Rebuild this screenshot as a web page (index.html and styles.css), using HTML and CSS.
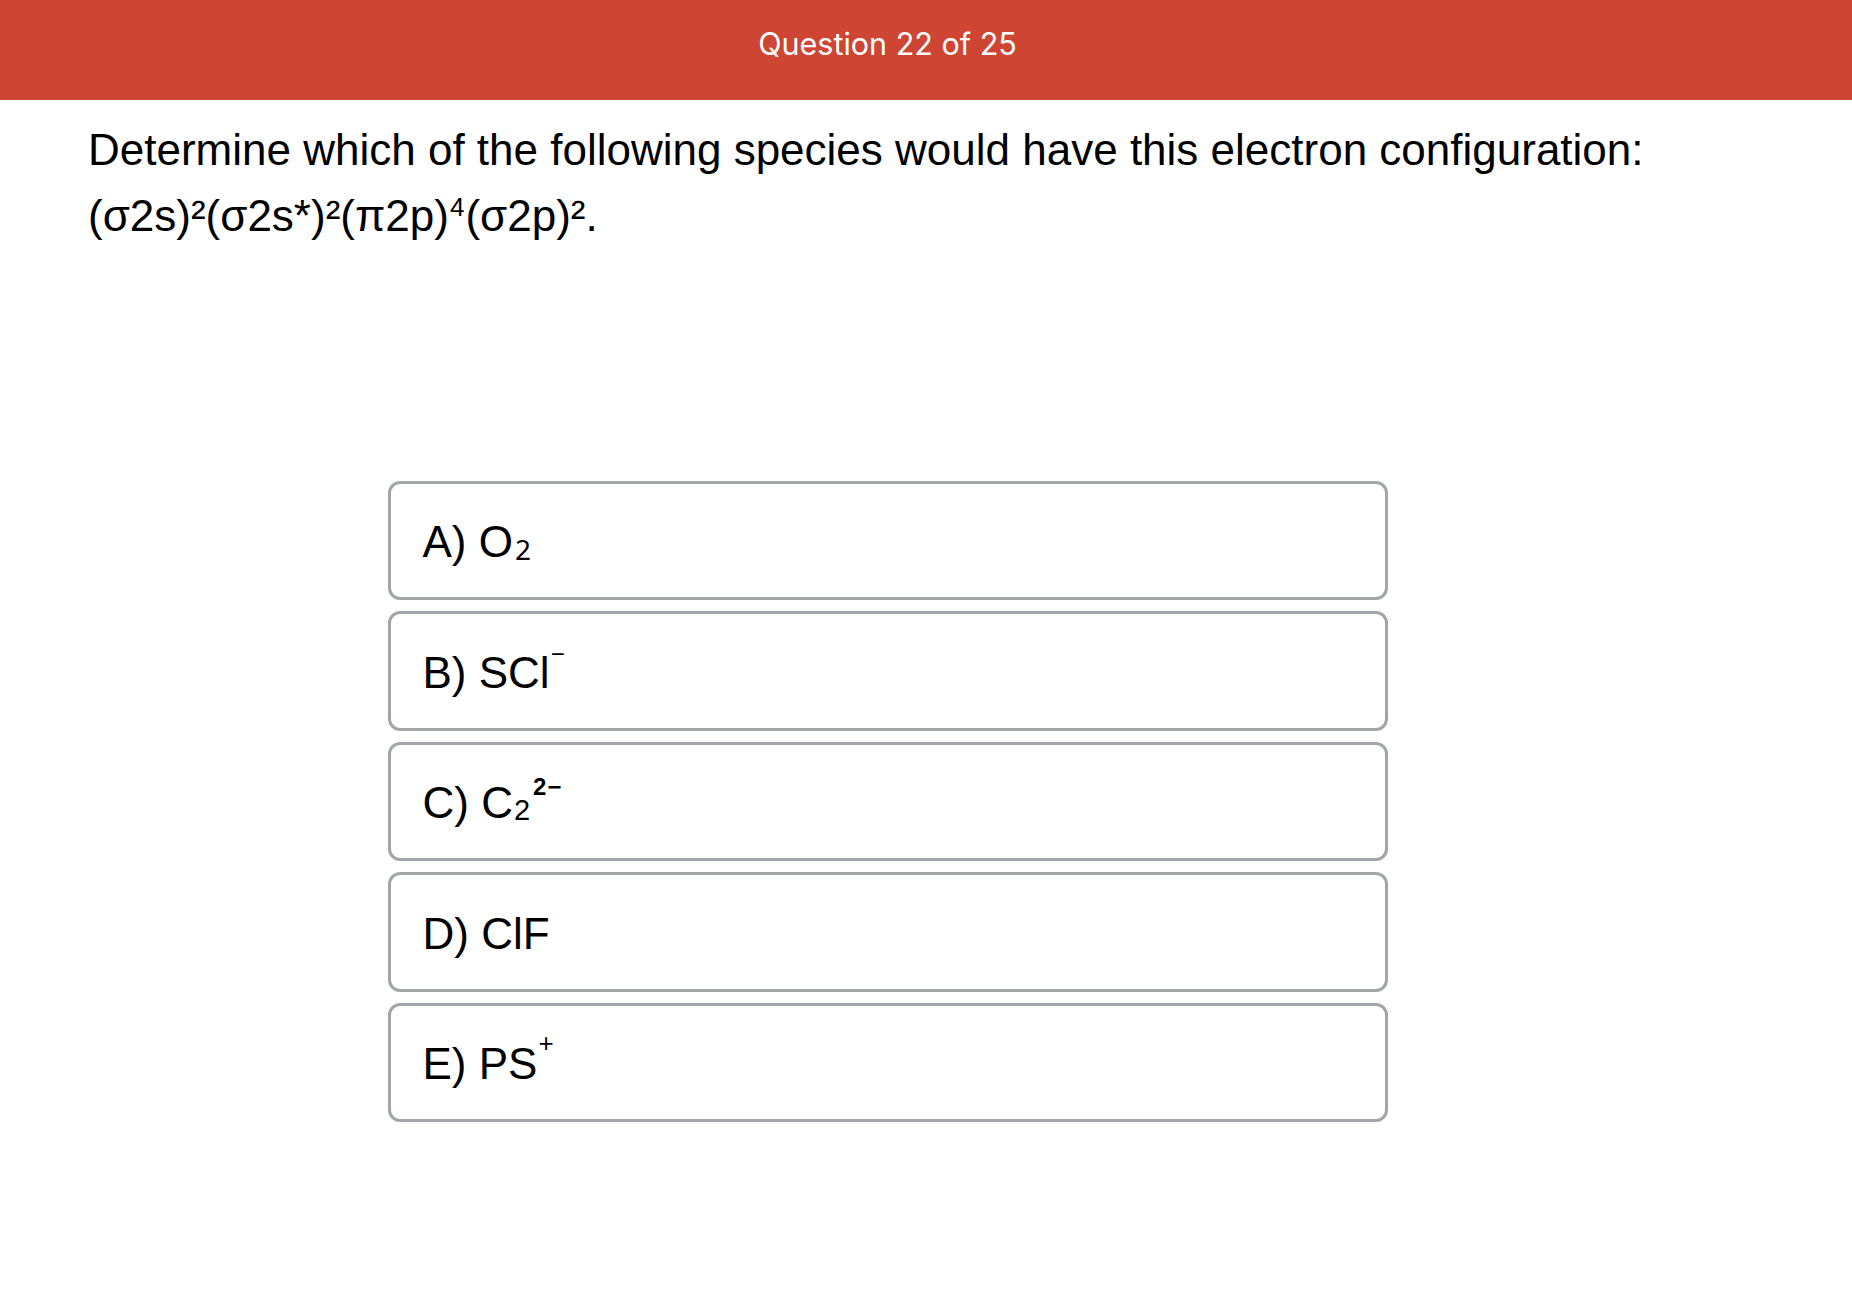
FILE: index.html
```html
<!DOCTYPE html>
<html lang="en">
<head>
<meta charset="utf-8">
<title>Question 22 of 25</title>
<link rel="stylesheet" href="styles.css">
</head>
<body>
<header class="topbar">
  <div class="topbar-inner">
    <span class="topbar-title">Question 22 of 25</span>
  </div>
</header>
<main class="page">
  <p class="question">Determine which of the following species would have this electron configuration:<br>(σ2s)²(σ2s*)²(π2p)<span class="q-sup">4</span>(σ2p)².</p>
  <div class="options">
    <div class="option">A) O<span class="noto-sub">2</span></div>
    <div class="option">B) SCl<span class="charge-minus">−</span></div>
    <div class="option">C) C<span class="index">2</span><span class="charge-bold">2−</span></div>
    <div class="option">D) ClF</div>
    <div class="option">E) PS<span class="charge-plus">+</span></div>
  </div>
</main>
</body>
</html>
```

FILE: styles.css
```css
html, body {
  margin: 0;
  padding: 0;
  background: #ffffff;
}

body {
  font-family: "Liberation Sans", Arial, Helvetica, sans-serif;
  color: #000000;
}

.topbar {
  height: 100px;
  background: #cf4533;
}

.topbar-inner {
  width: 1775px;
  height: 100%;
  display: flex;
  justify-content: center;
  padding-top: 26px;
  box-sizing: border-box;
}

.topbar-title {
  font-family: Inter, Roboto, sans-serif;
  font-size: 30.5px;
  line-height: 36px;
  color: #ffffff;
}

.page {
  width: 1775px;
  padding: 0 80px;
  box-sizing: border-box;
}

.question {
  margin: 17px 0 0 8px;
  font-size: 44px;
  line-height: 66px;
}

.q-sup {
  font-size: 26px;
  line-height: 0;
  position: relative;
  top: -15px;
  margin: 0 1px;
}

.options {
  width: 1000px;
  margin: 231.5px auto 0 auto;
  display: flex;
  flex-direction: column;
  gap: 11px;
}

.option {
  height: 119.5px;
  box-sizing: border-box;
  border: 3px solid #a2a5aa;
  border-radius: 12px;
  padding: 4px 32px 0 32px;
  display: flex;
  align-items: center;
  font-size: 44px;
  line-height: 50px;
}

.noto-sub {
  font-family: "Noto Sans", sans-serif;
  font-size: 28px;
  line-height: 0;
  position: relative;
  top: 7px;
  margin-left: 2px;
}

.index {
  font-size: 29px;
  line-height: 0;
  position: relative;
  top: 7px;
  margin-left: 1px;
}

.charge-bold {
  font-size: 24px;
  font-weight: bold;
  line-height: 0;
  position: relative;
  top: -16px;
  margin-left: 3px;
  letter-spacing: 1px;
}

.charge-minus {
  font-size: 24px;
  line-height: 0;
  position: relative;
  top: -19px;
  margin-left: 1px;
}

.charge-plus {
  font-size: 26px;
  line-height: 0;
  position: relative;
  top: -21px;
  margin-left: 1px;
}
```
